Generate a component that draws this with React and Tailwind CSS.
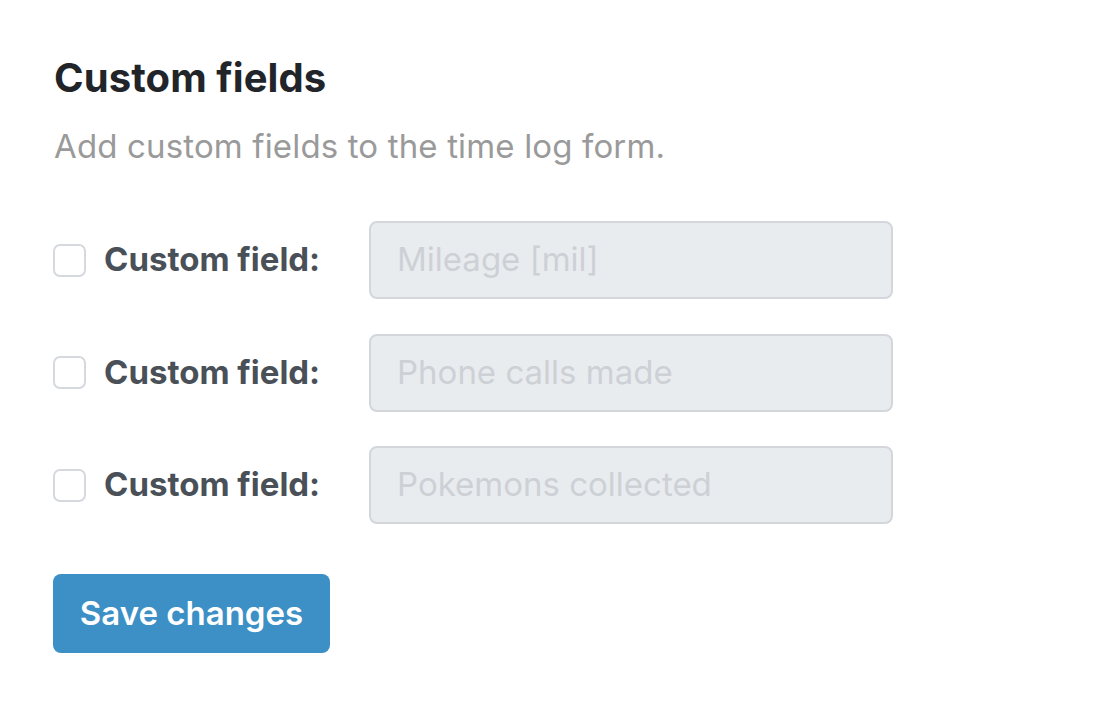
export default function App() {
  const rows = ["Mileage [mil]", "Phone calls made", "Pokemons collected"];
  return (
    <div className="min-h-screen bg-white" style={{ fontFamily: "Inter, 'Noto Sans', sans-serif" }}>
      <div className="pl-[54px] pt-[54px]">
        <h1 className="text-[40px] leading-[48px] font-bold text-[#212529] tracking-[0.1px]">Custom fields</h1>
        <p className="mt-[24px] text-[33px] leading-[40px] text-[#9a9a9a] tracking-[0.15px]">Add custom fields to the time log form.</p>
        <div className="mt-[55px] flex flex-col gap-[34.5px]">
          {rows.map((r) => (
            <div key={r} className="flex items-center">
              <div className="w-[33px] h-[33px] rounded-[7px] border-2 border-[#d5d9de] bg-white shrink-0 -ml-px" />
              <span className="ml-[18px] w-[265px] text-[33px] font-bold text-[#495057]">Custom field:</span>
              <div className="w-[524px] h-[78px] rounded-[8px] border-2 border-[#d3d7dc] bg-[#e9ecef] flex items-center pl-[26px] text-[33px] text-[#cdd1d6]">
                {r}
              </div>
            </div>
          ))}
        </div>
        <button className="block mt-[50px] -ml-px w-[277px] h-[79px] rounded-[8px] bg-[#3c90c5] text-white text-[33px] font-semibold">
          Save changes
        </button>
      </div>
    </div>
  );
}
